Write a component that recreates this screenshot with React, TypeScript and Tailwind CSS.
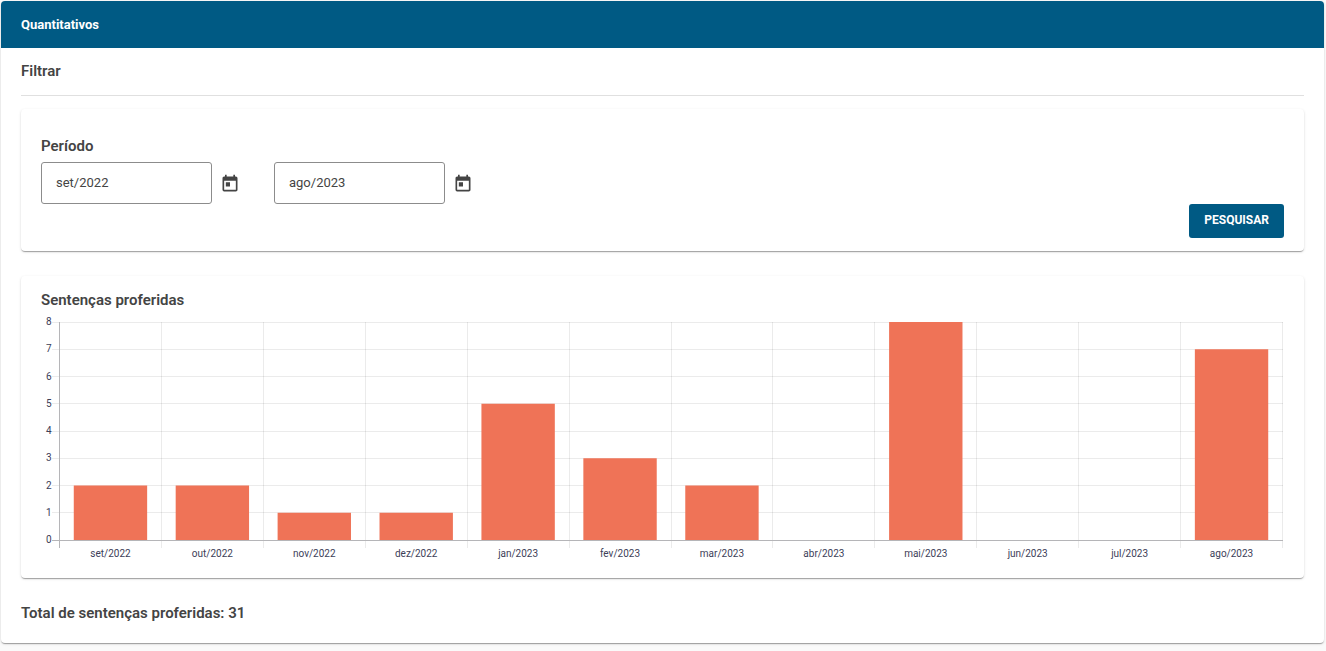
import React from 'react';
import { MdToday } from 'react-icons/md';

interface MonthTotal {
    month: string;
    total: number;
}

const DATA: MonthTotal[] = [
    { month: 'set/2022', total: 2 },
    { month: 'out/2022', total: 2 },
    { month: 'nov/2022', total: 1 },
    { month: 'dez/2022', total: 1 },
    { month: 'jan/2023', total: 5 },
    { month: 'fev/2023', total: 3 },
    { month: 'mar/2023', total: 2 },
    { month: 'abr/2023', total: 0 },
    { month: 'mai/2023', total: 8 },
    { month: 'jun/2023', total: 0 },
    { month: 'jul/2023', total: 0 },
    { month: 'ago/2023', total: 7 },
];

const MAX = 8;
const PLOT_HEIGHT = 218;
const TICKS = Array.from({ length: MAX + 1 }, (_, i) => i);

const Card: React.FC<{ className?: string; children: React.ReactNode }> = ({ className = '', children }) => (
    <section
        className={`rounded bg-white shadow-[0_2px_1px_-1px_rgba(0,0,0,0.2),0_1px_1px_0_rgba(0,0,0,0.14),0_1px_3px_0_rgba(0,0,0,0.12)] ${className}`}
    >
        {children}
    </section>
);

const MonthField: React.FC<{ id: string; label: string; value: string }> = ({ id, label, value }) => (
    <div className="flex items-center gap-2">
        <input
            id={id}
            type="text"
            aria-label={label}
            defaultValue={value}
            className="h-[42px] w-[171px] rounded-[3px] border border-[#8c8c8c] bg-white px-3.5 pb-0.5 text-[13px] text-[#444]"
        />
        <button type="button" aria-label={`Abrir calendário: ${label}`} className="pt-0.5 text-[#444]">
            <MdToday className="h-5 w-5" />
        </button>
    </div>
);

const BarChart: React.FC<{ data: MonthTotal[] }> = ({ data }) => {
    const step = 100 / data.length;
    const y = (value: number) => PLOT_HEIGHT - (value * PLOT_HEIGHT) / MAX;

    return (
        <div className="pt-[11px] pr-0.5 pb-[38px] pl-[18px]">
            <svg
                role="img"
                aria-label="Sentenças proferidas por mês"
                className="block h-[218px] w-full overflow-visible"
                fontSize="10"
                fill="#3c4058"
            >
                <g transform="translate(0.5 0)">
                    <g stroke="#000" strokeOpacity="0.08" shapeRendering="crispEdges">
                        {TICKS.map(t => (
                            <line key={t} x1="-8" x2="100%" y1={y(t)} y2={y(t)} />
                        ))}
                        {data.concat(data[0]).map((_, i) => (
                            <line key={i} x1={`${i * step}%`} x2={`${i * step}%`} y1="0" y2={PLOT_HEIGHT + 8} />
                        ))}
                    </g>
                    {data.map((d, i) => d.total > 0 && (
                        <rect
                            key={d.month}
                            x={`${(i + 0.14) * step}%`}
                            y={y(d.total)}
                            width={`${step * 0.72}%`}
                            height={PLOT_HEIGHT - y(d.total)}
                            fill="#ef7357"
                        />
                    ))}
                    <g stroke="#b5b5b8" shapeRendering="crispEdges">
                        <line x1="0" x2="0" y1="0" y2={PLOT_HEIGHT + 8} />
                        <line x1="-8" x2="100%" y1={PLOT_HEIGHT} y2={PLOT_HEIGHT} />
                    </g>
                    {TICKS.map(t => (
                        <text key={t} x="-8" y={y(t) + 3} textAnchor="end">{t}</text>
                    ))}
                    {data.map((d, i) => (
                        <text key={d.month} x={`${(i + 0.5) * step}%`} y={PLOT_HEIGHT + 17} textAnchor="middle">
                            {d.month}
                        </text>
                    ))}
                </g>
            </svg>
        </div>
    );
};

export default function App() {
    const total = DATA.reduce((acc, curr) => acc + curr.total, 0);

    return (
        <div className="min-h-screen bg-[#fafafa] pt-px pr-0.5 pb-2 pl-px font-['Roboto',sans-serif] text-[#444]">
            <Card>
                <header className="rounded-t bg-[#005a84] px-5 py-3.5">
                    <h1 className="text-[13px] leading-[19px] font-bold text-white">Quantitativos</h1>
                </header>

                <main className="px-5 pb-[19px]">
                    <h2 className="border-b border-[#e0e0e0] pt-3 pb-[13px] text-[15px] leading-[22px] font-semibold">Filtrar</h2>

                    <Card className="mt-[13px] px-5 pt-[26px] pb-[13px]">
                        <form onSubmit={e => e.preventDefault()}>
                            <fieldset>
                                <legend className="pb-[5px] text-[15px] leading-[22px] font-semibold">Período</legend>
                                <div className="flex flex-wrap gap-[34px]">
                                    <MonthField id="inicio" label="Mês inicial" value="set/2022" />
                                    <MonthField id="fim" label="Mês final" value="ago/2023" />
                                </div>
                            </fieldset>
                            <div className="flex justify-end">
                                <button
                                    type="submit"
                                    className="rounded-[3px] bg-[#005a84] px-[15px] pt-1.5 pb-2 text-[12px] leading-5 font-bold text-white"
                                >
                                    PESQUISAR
                                </button>
                            </div>
                        </form>
                    </Card>

                    <Card className="mt-[25px] px-5 pt-[13px]">
                        <h2 className="text-[15px] leading-[22px] font-semibold">Sentenças proferidas</h2>
                        <BarChart data={DATA} />
                    </Card>

                    <p className="mt-6 text-[15px] leading-[22px] font-semibold">Total de sentenças proferidas: {total}</p>
                </main>
            </Card>
        </div>
    );
}
